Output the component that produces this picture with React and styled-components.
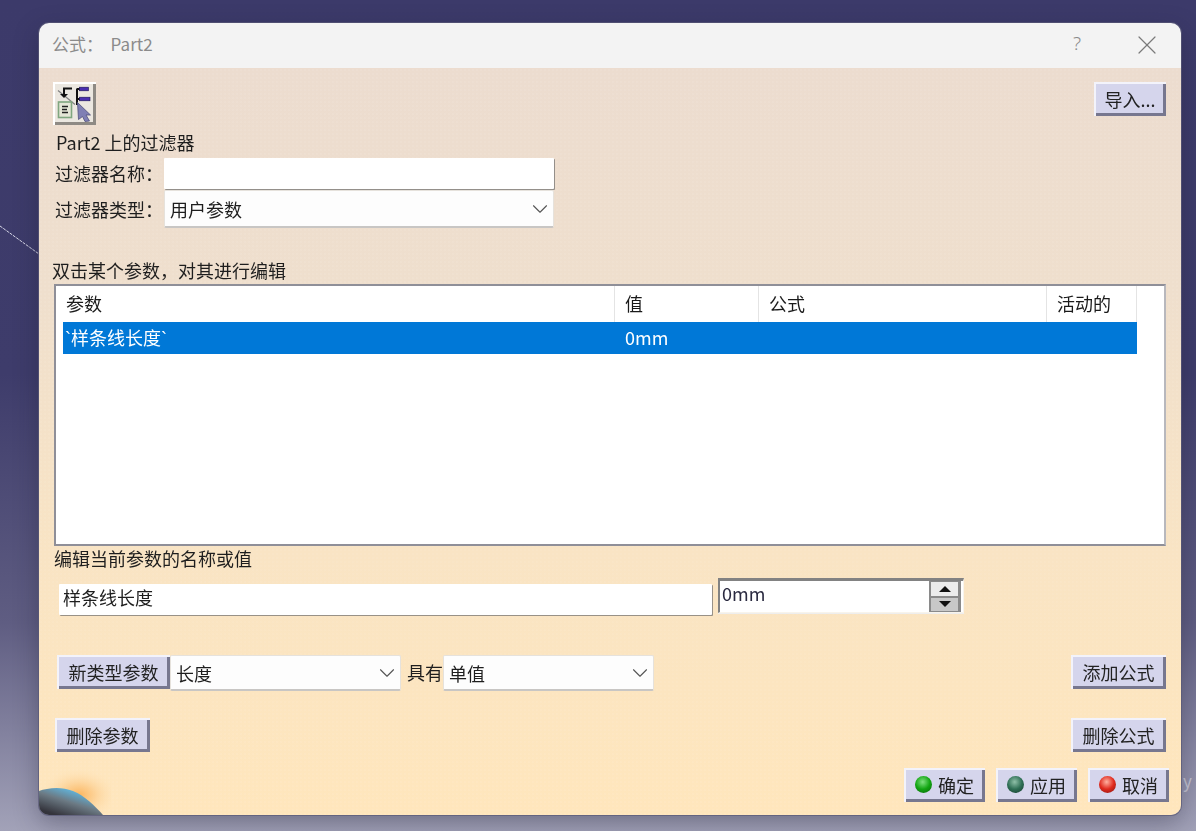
import React from "react";
import styled, { createGlobalStyle } from "styled-components";
import { ChevronDown, X } from "lucide-react";

const GlobalStyle = createGlobalStyle`
    html, body {
        margin: 0;
        padding: 0;
        height: 831px;
        overflow: hidden;
    }
    body {
        font-family: "Noto Sans CJK SC", "Noto Sans", sans-serif;
        background: linear-gradient(180deg, #3c3a6a 0%, #3e3c6b 45%, #5f5d82 75%, #a2a2b8 100%);
    }
    * {
        box-sizing: border-box;
    }
`;

const Desktop = styled.div`
    position: relative;
    width: 1196px;
    height: 831px;
    padding: 23px 15px 16px 39px;
`;

const WireLine = styled.svg`
    position: absolute;
    left: 0;
    top: 220px;
`;

const StrayLetter = styled.span`
    position: absolute;
    left: 1183px;
    top: 768px;
    font-size: 17px;
    color: #c4c4d2;
`;

const Dialog = styled.div`
    position: relative;
    width: 1142px;
    height: 792px;
    border-radius: 10px;
    overflow: hidden;
    display: flex;
    flex-direction: column;
    box-shadow: 0 0 0 1px rgba(90, 90, 120, 0.7), 0 8px 24px rgba(30, 30, 50, 0.35);
`;

const TitleBar = styled.div`
    height: 45px;
    flex: none;
    background: #f3f3f3;
    display: flex;
    align-items: center;
    padding: 0 18px 2px 13px;
    color: #8b8b8b;
    font-size: 17px;
`;

const TitleText = styled.span`
    flex: 1;
    white-space: pre;
    margin-top: -3px;
`;

const HelpMark = styled.span`
    font-size: 19px;
    font-family: "Noto Sans", sans-serif;
    font-weight: 300;
    color: #8a8a8a;
    margin: -3px 50px 0 0;
`;

const Content = styled.div`
    position: relative;
    flex: 1;
    display: flex;
    flex-direction: column;
    padding: 14px 15px 0 14px;
    color: #1e1e1e;
    font-size: 18px;
    filter: blur(0.35px);
    background-color: #f4e2cb;
    background-image:
        radial-gradient(rgba(255, 255, 255, 0.12) 0.6px, transparent 0.8px),
        linear-gradient(180deg, #ecdccf 0%, #efdfcd 30%, #f9e4c4 65%, #ffe6bc 100%);
    background-size: 4px 4px, 100% 100%;
`;

const SpreadRow = styled.div`
    display: flex;
    align-items: flex-start;
    justify-content: space-between;
`;

const BevelButton = styled.div`
    display: flex;
    align-items: center;
    justify-content: center;
    gap: 6px;
    flex: none;
    width: ${(p) => p.$w}px;
    height: 34px;
    padding-bottom: 1px;
    background: #d5d5ec;
    color: #222222;
    font-size: 18px;
    box-shadow:
        inset 2px 2px 0 #f3f3fb,
        inset -3px -3px 0 #77778f;
`;

const IconButton = styled.div`
    width: 43px;
    height: 43px;
    background: #ebe7e0;
    display: flex;
    align-items: center;
    justify-content: center;
    box-shadow:
        inset 2px 2px 0 #ffffff,
        inset -3px -3px 0 #8e8a84;
`;

const Caption = styled.div`
    height: 24px;
    line-height: 24px;
    margin-top: ${(p) => p.$top || 0}px;
    margin-left: ${(p) => p.$left || 0}px;
    margin-bottom: ${(p) => p.$bottom || 0}px;
`;

const FieldRow = styled.div`
    display: flex;
    align-items: center;
    margin-left: 2px;
    margin-top: ${(p) => p.$top || 0}px;
`;

const FieldLabel = styled.span`
    width: 109px;
    flex: none;
    margin-top: -1px;
`;

const TextInput = styled.div`
    width: ${(p) => p.$w}px;
    height: 31px;
    padding-left: 4px;
    line-height: 26px;
    background: #ffffff;
    box-shadow: 1px 1px 0 rgba(110, 110, 110, 0.7);
    border-radius: 1px;
`;

const Select = styled.div`
    display: flex;
    align-items: center;
    justify-content: space-between;
    flex: none;
    width: ${(p) => p.$w}px;
    height: ${(p) => p.$h || 36}px;
    padding: 0 0 0 5px;
    background: #fdfdfd;
    border: 1px solid #e6e2dc;
    border-bottom: 2px solid #c8c6c4;
    border-radius: 2px;
    color: #1e1e1e;
`;

const Table = styled.div`
    width: 1112px;
    height: 262px;
    margin-left: 1px;
    background: #ffffff;
    border: 2px solid #8f8f98;
    border-right-color: #b8b8bd;
    padding-right: 27px;
`;

const TableHead = styled.div`
    display: grid;
    grid-template-columns: 559px 144px 288px 90px;
    height: 36px;
`;

const HeadCell = styled.div`
    padding-left: 10px;
    line-height: 35px;
    color: #1a1a1a;
    border-right: 1px solid #e4e4e4;
`;

const TableRow = styled.div`
    display: grid;
    grid-template-columns: 552px 144px 288px 90px;
    height: 32px;
    margin-left: 7px;
    line-height: 31px;
    background: #0078d7;
    color: #ffffff;
`;

const RowCell = styled.div`
    padding-left: ${(p) => p.$pad}px;
    white-space: nowrap;
`;

const Tick = styled.span`
    font-family: "Liberation Sans", sans-serif;
`;

const EditRow = styled.div`
    display: flex;
    align-items: flex-start;
    margin: 14px 0 0 6px;
`;

const SpinBox = styled.div`
    display: flex;
    width: 246px;
    height: 35px;
    margin: -6px 0 0 6px;
    background: #ffffff;
    border: 1px solid #f8f4ec;
    border-top: 3px solid #828282;
    border-left: 2px solid #828282;
    box-shadow: 0 1px 0 #eeeeee;
`;

const SpinValue = styled.div`
    flex: 1;
    padding-left: 2px;
    line-height: 24px;
    color: #2a2a40;
`;

const SpinButtons = styled.div`
    width: 32px;
    margin-right: 2px;
    background: #8a8a8a;
    padding: 1px 3px 1px 2px;
    display: flex;
    flex-direction: column;
    gap: 2px;
`;

const SpinButton = styled.div`
    flex: 1;
    background: ${(p) => (p.$down ? "#c8c8c8" : "#ececec")};
    display: flex;
    align-items: center;
    justify-content: center;
`;

const Triangle = styled.span`
    width: 0;
    height: 0;
    border-left: 6px solid transparent;
    border-right: 6px solid transparent;
    ${(p) => (p.$down ? "border-top" : "border-bottom")}: 6px solid #111111;
`;

const ActionRow = styled.div`
    display: flex;
    align-items: flex-start;
    margin-top: ${(p) => p.$top}px;
    margin-left: ${(p) => p.$left}px;
`;

const WithLabel = styled.span`
    width: 36px;
    flex: none;
    margin-left: 6px;
    line-height: 34px;
`;

const RightButton = styled(BevelButton)`
    margin-left: auto;
`;

const Footer = styled.div`
    display: flex;
    justify-content: flex-end;
    gap: 11px;
    margin: 16px -3px 0 0;
`;

const Led = styled.span`
    width: 17px;
    height: 17px;
    border-radius: 50%;
    flex: none;
    background: radial-gradient(circle at 45% 35%, ${(p) => p.$light} 0%, ${(p) => p.$color} 50%, ${(p) => p.$dark} 100%);
`;

const Globe = styled.svg`
    position: absolute;
    left: 0;
    bottom: 0;
`;

const FilterIcon = () => (
    <svg width="36" height="36" viewBox="0 0 36 36">
        <path d="M1 4.5 L18 18.5" stroke="#808080" strokeWidth="1.2" />
        <path d="M15 2.5 H7 V8" fill="none" stroke="#111" strokeWidth="2" />
        <path d="M3 8 H11 L7 12 Z" fill="#111" />
        <rect x="1.5" y="16" width="13" height="15.5" fill="#e4e6d6" stroke="#7fa67f" strokeWidth="1.6" />
        <path d="M5 20.5 H11 M5 23.5 H10 M5 26.5 H11" stroke="#222" strokeWidth="1.3" />
        <path d="M20 2.5 V19 M20 3 H23 M20 13 H23" fill="none" stroke="#111" strokeWidth="2" />
        <rect x="22.5" y="1.2" width="9" height="3.6" fill="#4a2fb0" stroke="#1b1450" strokeWidth="0.6" />
        <rect x="22.5" y="11.2" width="10.5" height="3.6" fill="#4a2fb0" stroke="#1b1450" strokeWidth="0.6" />
        <path d="M20.5 16.5 L33.5 29 H29 L32.5 35 L28 35.5 L25.5 30.5 L21.5 33.5 Z" fill="#7f7fb4" stroke="#50507c" strokeWidth="0.8" />
    </svg>
);

const App = () => {
    return (
        <Desktop>
            <GlobalStyle />
            <WireLine width="40" height="40" viewBox="0 0 40 40">
                <path d="M0 6 L39 34" stroke="#d8d8e8" strokeWidth="1" strokeDasharray="3 1" />
            </WireLine>
            <StrayLetter>y</StrayLetter>
            <Dialog>
                <TitleBar>
                    <TitleText>公式：  Part2</TitleText>
                    <HelpMark>?</HelpMark>
                    <X size={32} strokeWidth={0.9} color="#7a7a7a" />
                </TitleBar>
                <Content>
                    <SpreadRow>
                        <IconButton>
                            <FilterIcon />
                        </IconButton>
                        <BevelButton $w={72}>导入...</BevelButton>
                    </SpreadRow>
                    <Caption $top={5} $left={3}>Part2 上的过滤器</Caption>
                    <FieldRow $top={4}>
                        <FieldLabel>过滤器名称：</FieldLabel>
                        <TextInput $w={390} />
                    </FieldRow>
                    <FieldRow $top={1}>
                        <FieldLabel>过滤器类型：</FieldLabel>
                        <Select $w={390} $h={38}>
                            用户参数
                            <ChevronDown size={26} strokeWidth={1} color="#555" />
                        </Select>
                    </FieldRow>
                    <Caption $top={30} $left={-1} $bottom={2}>双击某个参数，对其进行编辑</Caption>
                    <Table>
                        <TableHead>
                            <HeadCell>参数</HeadCell>
                            <HeadCell>值</HeadCell>
                            <HeadCell>公式</HeadCell>
                            <HeadCell>活动的</HeadCell>
                        </TableHead>
                        <TableRow>
                            <RowCell $pad={2}>
                                <Tick>`</Tick>样条线长度<Tick>`</Tick>
                            </RowCell>
                            <RowCell $pad={10}>0mm</RowCell>
                            <RowCell $pad={10} />
                            <RowCell $pad={10} />
                        </TableRow>
                    </Table>
                    <Caption $left={1}>编辑当前参数的名称或值</Caption>
                    <EditRow>
                        <TextInput $w={653}>样条线长度</TextInput>
                        <SpinBox>
                            <SpinValue>0mm</SpinValue>
                            <SpinButtons>
                                <SpinButton>
                                    <Triangle />
                                </SpinButton>
                                <SpinButton $down>
                                    <Triangle $down />
                                </SpinButton>
                            </SpinButtons>
                        </SpinBox>
                    </EditRow>
                    <ActionRow $top={40} $left={4}>
                        <BevelButton $w={113}>新类型参数</BevelButton>
                        <Select $w={231}>
                            长度
                            <ChevronDown size={26} strokeWidth={1} color="#555" />
                        </Select>
                        <WithLabel>具有</WithLabel>
                        <Select $w={211}>
                            单值
                            <ChevronDown size={26} strokeWidth={1} color="#555" />
                        </Select>
                        <RightButton $w={95}>添加公式</RightButton>
                    </ActionRow>
                    <ActionRow $top={27} $left={2}>
                        <BevelButton $w={95}>删除参数</BevelButton>
                        <RightButton $w={95}>删除公式</RightButton>
                    </ActionRow>
                    <Footer>
                        <BevelButton $w={81}>
                            <Led $light="#7fe07f" $color="#12a512" $dark="#0a5f0a" />
                            确定
                        </BevelButton>
                        <BevelButton $w={81}>
                            <Led $light="#8fc0a8" $color="#2f6f55" $dark="#123528" />
                            应用
                        </BevelButton>
                        <BevelButton $w={81}>
                            <Led $light="#ffb0a0" $color="#e02a1e" $dark="#7f1510" />
                            取消
                        </BevelButton>
                    </Footer>
                    <Globe width="72" height="50" viewBox="0 0 72 50">
                        <defs>
                            <radialGradient id="halo" cx="0.55" cy="0.6" r="0.55">
                                <stop offset="0" stopColor="#fbb45c" />
                                <stop offset="0.35" stopColor="#fcc883" stopOpacity="0.8" />
                                <stop offset="1" stopColor="#ffe6bc" stopOpacity="0" />
                            </radialGradient>
                            <linearGradient id="planet" x1="0.15" y1="0.9" x2="0.75" y2="0.1">
                                <stop offset="0" stopColor="#34343c" />
                                <stop offset="0.5" stopColor="#6c7a84" />
                                <stop offset="0.85" stopColor="#62aed2" />
                                <stop offset="1" stopColor="#9fd4e6" />
                            </linearGradient>
                        </defs>
                        <rect width="72" height="50" fill="url(#halo)" />
                        <path d="M0 26 C8 23 22 21 34 26 C46 31 56 41 64 50 H0 Z" fill="url(#planet)" />
                    </Globe>
                </Content>
            </Dialog>
        </Desktop>
    );
};

export default App;
